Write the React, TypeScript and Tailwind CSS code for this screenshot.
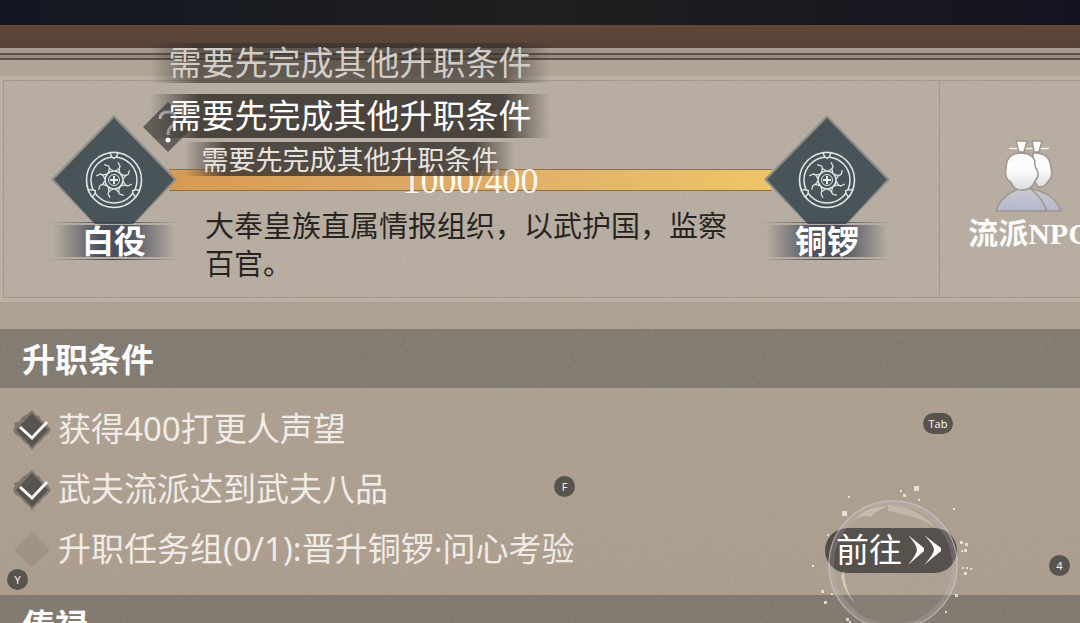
import { useState } from 'react'
import type { ReactNode } from 'react'

const conditions = [
    { id: 'fame', text: '获得400打更人声望', done: true },
    { id: 'level', text: '武夫流派达到武夫八品', done: true },
    { id: 'quest', text: '升职任务组(0/1):晋升铜锣·问心考验', done: false },
]

const toastText = '需要先完成其他升职条件'

const sparks = [
    [104, 12, 5], [32, 37, 5], [90, 16, 2], [93, 20, 3], [108, 25, 2], [38, 22, 2],
    [143, 34, 2], [17, 60, 2], [150, 67, 3], [155, 69, 3], [154, 75, 3], [151, 76, 2],
    [152, 93, 2], [156, 93, 2], [160, 94, 2], [154, 98, 3], [2, 91, 2], [11, 116, 3],
    [14, 127, 3], [21, 119, 2], [145, 120, 3], [135, 137, 2], [36, 144, 3], [39, 147, 2],
]

// Round gong emblem: double ring, eight rays and a small hub
function Emblem() {
    return (
        <g fill="none" stroke="#e3e8ea" strokeLinejoin="round">
            <circle cx="63" cy="65" r="27.5" strokeWidth="1.6" />
            <circle cx="63" cy="65" r="23" strokeWidth="1.5" />
            <circle cx="63" cy="65" r="9" strokeWidth="1.5" />
            <circle cx="63" cy="65" r="5.5" strokeWidth="1" />
            <path d="M63 61v8M59 65h8" strokeWidth="2" />
            {[0, 45, 90, 135, 180, 225, 270, 315].map((angle) => (
                <path
                    key={angle}
                    d="M60 47L63.500 50Q62.800 53 65.800 56M63.500 50Q64 53 60.500 56"
                    strokeWidth="1.2"
                    transform={`rotate(${angle + 22} 63 65)`}
                />
            ))}
            {[0, 120, 240].map((angle) => (
                <path
                    key={angle}
                    d="M59 37.500l1.500 4 2.500 2 2.500-2 1.500-4z"
                    fill="#495459"
                    strokeWidth="1.4"
                    transform={`rotate(${angle} 63 65)`}
                />
            ))}
        </g>
    )
}

function RankBadge({ name, children }: { name: string; children?: ReactNode }) {
    return (
        <div className="relative z-10 flex w-[126px] shrink-0 flex-col items-center">
            <svg viewBox="0 0 126 128" className="h-[128px] w-[126px]" aria-hidden="true">
                <path d="M63 0L126 64.500L84 108H42L0 64.500z" fill="#8d8e88" />
                <path d="M63 3L123 64.500L82 109H44L3 64.500z" fill="#495459" />
                <Emblem />
            </svg>
            <div className="-mt-[21px] flex h-[38px] w-[132px] flex-col justify-between">
                <div className="h-px bg-linear-to-r from-transparent via-[#3c4048] to-transparent" />
                <div className="flex h-8 items-center justify-center bg-[linear-gradient(to_right,transparent_4%,#4a505e_40%,#4a505e_60%,transparent_96%)] pb-1">
                    <span className="text-[32px] leading-8 font-bold text-white">{name}</span>
                </div>
                <div className="h-px bg-linear-to-r from-transparent via-[#3c4048] to-transparent" />
            </div>
            {children}
        </div>
    )
}

function NpcIcon() {
    return (
        <svg viewBox="0 0 68 76" className="h-[76px] w-[68px]" aria-hidden="true">
            <defs>
                <linearGradient id="npc-body" x1="0" y1="0" x2="0" y2="1">
                    <stop offset="0" stopColor="#cbcad0" />
                    <stop offset="1" stopColor="#b2b7cf" />
                </linearGradient>
                <linearGradient id="npc-head" x1="0" y1="0" x2="0" y2="1">
                    <stop offset="0.5" stopColor="#ffffff" />
                    <stop offset="1" stopColor="#dddde0" />
                </linearGradient>
            </defs>
            <path d="M14 10.500h40" stroke="#f4f2f0" strokeWidth="1.5" />
            <g stroke="#a09488" strokeWidth="1.5" strokeLinejoin="round">
                <path d="M35 51Q59 54 66 73H40z" fill="url(#npc-body)" />
                <path d="M38 15Q55 14 56 30Q58 39 54 42Q50 50 43 49L38 40z" fill="url(#npc-head)" />
                <path d="M37 3h10l-3 11h-5z" fill="#fff" />
                <path d="M1 73Q6 57 24 51H36Q47 60 52 73z" fill="url(#npc-body)" />
                <path d="M26 15Q37 15 40 23Q39 28 42 32Q45 38 40 43Q37 52 27 52Q18 52 16 44Q9 41 11 31Q11 15 26 15z" fill="url(#npc-head)" />
                <path d="M21 3h11l-3 11h-5z" fill="#fff" />
            </g>
        </svg>
    )
}

function ConditionRow({ id, text, done, children }: { id: string; text: string; done: boolean; children?: ReactNode }) {
    const [checked, setChecked] = useState(done)

    return (
        <li className="flex h-[60px] items-center justify-between">
            <div className="flex items-center gap-1.5">
                <span className="grid">
                    <input
                        id={id}
                        type="checkbox"
                        checked={checked}
                        onChange={(e) => setChecked(e.target.checked)}
                        className="col-start-1 row-start-1 size-10 appearance-none"
                    />
                    <svg viewBox="0 0 40 40" className="pointer-events-none col-start-1 row-start-1 size-10" aria-hidden="true">
                        {checked ? (
                            <>
                                <path d="M20 0l4 5 3 1 3 5 4 2 5 7-4 5-3 2-4 5-4 3-4 5-4-5-4-3-4-5-4-2-3-5 2-4-1-3 6-2 1-3 5-3z" fill="#4a4743" opacity="0.5" />
                                <path d="M20 3l16 17-16 17L4 20z" fill="#4b4946" opacity="0.85" />
                                <path d="M8 17l12 11 15-16" fill="none" stroke="#fff" strokeWidth="3" />
                            </>
                        ) : (
                            <path d="M20 2l18 18-18 17L2 20z" fill="#94887d" opacity="0.6" />
                        )}
                    </svg>
                </span>
                <label htmlFor={id} className="pb-0.5 font-['Noto_Sans','Noto_Sans_CJK_SC',sans-serif] text-[33px] leading-10 whitespace-nowrap text-[#f3eee9]">
                    {text}
                </label>
            </div>
            {children}
        </li>
    )
}

function GoButton() {
    return (
        <button className="relative z-10 mr-[123px] flex h-[45px] w-[132px] items-center rounded-full bg-[#514c47] pl-[11px] text-white">
            <span className="pb-1 text-[33px] leading-10">前往</span>
            <svg viewBox="0 0 36 32" className="ml-1 h-8 w-9" fill="#fff" aria-hidden="true">
                <path d="M2 1L18 14V17L2 31Q11 20 11 16Q11 11 2 1z" />
                <path d="M18 1L35 14V17L18 31Q28 20 28 16Q28 11 18 1z" />
            </svg>
            {/* Bubble highlight around the button */}
            <svg viewBox="0 0 170 160" className="pointer-events-none absolute -top-[54px] -left-[15px] h-[160px] w-[170px] max-w-none" aria-hidden="true">
                <circle cx="83" cy="91" r="64" fill="#fff" fillOpacity="0.03" stroke="#d2cad3" strokeOpacity="0.65" strokeWidth="1.5" />
                <circle cx="83" cy="91" r="61" fill="none" stroke="#c9c5d2" strokeOpacity="0.2" strokeWidth="4" />
                <path d="M44 47Q58 31 77 33Q64 37 61 43Q53 40 44 47z" fill="#eee7dc" opacity="0.35" />
                <path d="M78 31Q108 33 125 53Q107 42 78 37z" fill="#eee7dc" opacity="0.3" />
                <path d="M34 97Q35 120 48 132Q34 120 31 102z" fill="#f3ecdf" opacity="0.55" />
                <path d="M56 148Q83 158 112 146Q90 160 83 158Q70 157 56 148z" fill="#eee7dc" opacity="0.4" />
                {sparks.map(([x, y, size]) => (
                    <rect key={`${x}-${y}`} x={x} y={y} width={size} height={size} fill="#f3ede4" opacity="0.8" />
                ))}
            </svg>
        </button>
    )
}

function SectionHeader({ title }: { title: string }) {
    return (
        <h2 className="flex h-[59px] items-center bg-[#5d5953]/55 pb-0.5 pl-[22px] text-[33px] leading-10 font-bold text-white">
            {title}
        </h2>
    )
}

function KeyHint({ label, className }: { label: string; className: string }) {
    return (
        <kbd className={`absolute z-20 flex h-[21px] items-center justify-center rounded-full bg-[#59534d] font-['Open_Sans',sans-serif] text-[11px] leading-none text-white ${className}`}>
            {label}
        </kbd>
    )
}

export default function App() {
    return (
        <div className="relative h-screen w-full overflow-hidden bg-linear-to-b from-[#afa496] to-[#ab9c8c] font-['Noto_Sans_CJK_SC',sans-serif]">
            {/* Window edge */}
            <div className="h-[25px] bg-linear-to-r from-[#131722] via-[#1f1f1f] to-[#131420]" />
            <div className="h-[23px] bg-linear-to-b from-[#614838] to-[#554238]" />
            <div className="h-[5px] bg-[#a69b8e]" />
            <div className="h-[7px] border-y-2 border-[#5c5148] bg-[#958a7e]" />

            {/* Rank progress */}
            <section className="mt-4 bg-[#bbb0a3] py-1 pl-[3px]">
                <div className="flex border-y border-l border-[#a2978a] bg-[#b7aca0]">
                    <div className="flex flex-1 border-r border-[#a0958a] pt-[34px] pr-[49px] pb-[37px] pl-[47px]">
                        <RankBadge name="白役">
                            <button aria-label="帮助" className="absolute -top-[13px] left-[92px] size-[50px]">
                                <svg viewBox="0 0 50 50" className="size-full" aria-hidden="true">
                                    <path d="M25 0L50 25L25 50L0 25z" fill="#54504c" opacity="0.85" />
                                    <path d="M17 17Q17 10 25 10Q33 10 32 18Q31 23 27 26Q25 28 25 33" fill="none" stroke="#d0cbc6" strokeWidth="3" />
                                    <circle cx="25" cy="38" r="2.500" fill="#fff" />
                                </svg>
                            </button>
                        </RankBadge>
                        <div className="h-[145px] flex-1 pt-[54px]">
                            <div
                                role="progressbar"
                                aria-label="声望"
                                aria-valuenow={400}
                                aria-valuemax={400}
                                className="-mx-2 grid h-[22px] place-items-center border-y border-[#8a6e46] bg-linear-to-r from-[#d8994f] via-[#e0ab64] to-[#f0c664]"
                            >
                                <span className="font-['Liberation_Serif',serif] text-[36px] leading-[22px] text-[#fffaf2]">1000/400</span>
                            </div>
                            <p className="mt-3.5 px-7 text-[29px] leading-[38px] text-[#1f1c19]">
                                大奉皇族直属情报组织，以武护国，监察百官。
                            </p>
                        </div>
                        <RankBadge name="铜锣" />
                    </div>
                    <div className="w-[140px] shrink-0 overflow-hidden pt-[57px]">
                        <button className="ml-6 flex w-[130px] flex-col items-center">
                            <NpcIcon />
                            <span className="font-['Liberation_Serif','Noto_Sans_CJK_SC',serif] text-[30px] leading-10 font-bold whitespace-nowrap text-white">
                                流派NPC
                            </span>
                        </button>
                    </div>
                </div>
            </section>

            {/* Promotion conditions */}
            <section className="mt-[27px]">
                <SectionHeader title="升职条件" />
                <ul className="pt-3 pb-[15px] pl-3">
                    {conditions.map((item) => (
                        <ConditionRow key={item.id} {...item}>
                            {!item.done && <GoButton />}
                        </ConditionRow>
                    ))}
                </ul>
            </section>

            <section>
                <SectionHeader title="俸禄" />
            </section>

            {/* Paper grain */}
            <svg className="pointer-events-none absolute inset-0 size-full opacity-10" aria-hidden="true">
                <filter id="grain" x="0" y="0" width="100%" height="100%">
                    <feTurbulence type="fractalNoise" baseFrequency="0.35" numOctaves="3" />
                    <feColorMatrix type="saturate" values="0" />
                </filter>
                <rect y="60" width="100%" height="100%" filter="url(#grain)" />
            </svg>

            {/* Toasts */}
            <div role="status" className="whitespace-nowrap text-white">
                <div className="absolute top-[43px] left-[150px] z-20 flex h-10 w-[400px] items-center justify-center bg-[linear-gradient(to_right,transparent,#37312da6_12%,#37312da6_88%,transparent)] pb-1">
                    <span className="text-[33px] leading-10 text-[#d3cdc8]">{toastText}</span>
                </div>
                <div className="absolute top-[94px] left-[150px] z-20 flex h-11 w-[400px] items-center justify-center bg-[linear-gradient(to_right,transparent,#37312dd9_12%,#37312dd9_88%,transparent)] pb-1">
                    <span className="text-[33px] leading-10">{toastText}</span>
                </div>
                <div className="absolute top-[142px] left-[185px] z-20 flex h-[34px] w-[330px] items-center justify-center bg-[linear-gradient(to_right,transparent,#37312dcc_12%,#37312dcc_88%,transparent)]">
                    <span className="text-[27px] leading-8 text-[#e8e3de]">{toastText}</span>
                </div>
            </div>

            {/* Key hints */}
            <KeyHint label="Tab" className="top-[413px] right-[127px] w-[30px]" />
            <KeyHint label="F" className="top-[476px] left-[554px] w-[21px]" />
            <KeyHint label="Y" className="top-[569px] left-[7px] w-[21px]" />
            <KeyHint label="4" className="top-[555px] right-[10px] w-[21px]" />
        </div>
    )
}
